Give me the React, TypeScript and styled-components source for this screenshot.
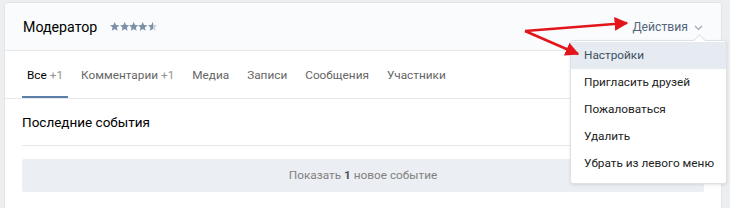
import styled, { createGlobalStyle } from 'styled-components'

const GlobalStyle = createGlobalStyle`
  html, body { margin: 0; padding: 0; }
  body {
    background: #edeef0;
    font-family: Roboto, "Open Sans", "Liberation Sans", sans-serif;
    -webkit-font-smoothing: antialiased;
  }
`

const tabs = [
  { label: 'Все', count: '+1', active: true },
  { label: 'Комментарии', count: '+1' },
  { label: 'Медиа' },
  { label: 'Записи' },
  { label: 'Сообщения' },
  { label: 'Участники' },
]

const menu = ['Настройки', 'Пригласить друзей', 'Пожаловаться', 'Удалить', 'Убрать из левого меню']

export default function App() {
  return (
    <>
      <GlobalStyle />
      <Page>
        <Card>
          <Header>
            <Title>Модератор</Title>
            <Stars>
              {[0, 1, 2, 3].map(i => <Star key={i} />)}
              <Star $half />
            </Stars>
            <Actions>
              Действия
              <svg width="9" height="6" viewBox="0 0 9 6">
                <path d="M1 1l3.5 3.5L8 1" fill="none" stroke="#9aa6b3" strokeWidth="1.2" />
              </svg>
            </Actions>
            <Menu>
              {menu.map((m, i) => (
                <MenuItem key={m} $active={i === 0}>{m}</MenuItem>
              ))}
            </Menu>
          </Header>

          <Tabs>
            {tabs.map(t => (
              <Tab key={t.label} $active={t.active}>
                {t.label}
                {t.count && <Count> {t.count}</Count>}
              </Tab>
            ))}
          </Tabs>

          <Body>
            <SectionTitle>Последние события</SectionTitle>
            <ShowMore>
              Показать <b>1</b> новое событие
            </ShowMore>
          </Body>
        </Card>

        {/* red annotation arrows */}
        <Arrows width="730" height="208" viewBox="0 0 730 208">
          <defs>
            <marker id="head" viewBox="0 0 10 10" refX="9" refY="5" markerWidth="5.5" markerHeight="5.5" orient="auto">
              <path d="M0 0L10 5L0 10z" fill="#e3151b" />
            </marker>
          </defs>
          <path d="M525 31L627 23" stroke="#e3151b" strokeWidth="2.5" fill="none" markerEnd="url(#head)" />
          <path d="M525 31L578 54" stroke="#e3151b" strokeWidth="2.5" fill="none" markerEnd="url(#head)" />
        </Arrows>
      </Page>
    </>
  )
}

function Star({ $half }: { $half?: boolean }) {
  return (
    <svg width="9.4" height="9.4" viewBox="0 0 10 10">
      <defs>
        <linearGradient id="half">
          <stop offset="55%" stopColor="#7c91a8" />
          <stop offset="55%" stopColor="#c9d2dc" />
        </linearGradient>
      </defs>
      <path
        d="M5 0l1.45 3.1 3.5.35-2.65 2.3.8 3.45L5 7.4 1.9 9.2l.8-3.45L.05 3.45l3.5-.35z"
        fill={$half ? 'url(#half)' : '#7c91a8'}
      />
    </svg>
  )
}

const Page = styled.div`
  position: relative;
  width: 730px;
  height: 208px;
  overflow: hidden;
  padding: 2px 8px 0 4px;
  box-sizing: border-box;
`
const Card = styled.div`
  background: #fff;
  border: 1px solid #e3e4e8;
  border-bottom: none;
  border-radius: 4px 4px 0 0;
  height: 240px;
`
const Header = styled.div`
  position: relative;
  display: flex;
  align-items: center;
  height: 47px;
  padding: 0 18px;
  background: #fafbfc;
  border-bottom: 1px solid #e7e8ec;
  border-radius: 4px 4px 0 0;
`
const Title = styled.div`
  font-size: 14.2px;
  color: #000;
`
const Stars = styled.div`
  display: flex;
  margin-left: 13px;
  margin-top: 1px;
`
const Actions = styled.div`
  margin-left: auto;
  display: flex;
  align-items: center;
  gap: 6px;
  font-size: 12.2px;
  color: #55677d;
  svg { margin-top: 2px; }
`
const Menu = styled.div`
  position: absolute;
  z-index: 2;
  top: 37px;
  right: -6px;
  width: 155px;
  background: #fff;
  border: 1px solid #dce1e6;
  border-radius: 3px;
  box-shadow: 0 1px 3px rgba(0, 0, 0, 0.1);
  padding: 1px 0 6px;
  &::before {
    content: '';
    position: absolute;
    top: -5px;
    right: 22px;
    width: 8px;
    height: 8px;
    background: #fff;
    border-left: 1px solid #dce1e6;
    border-top: 1px solid #dce1e6;
    transform: rotate(45deg);
  }
`
const MenuItem = styled.div<{ $active?: boolean }>`
  position: relative;
  height: 27px;
  line-height: 27px;
  padding: 0 13px;
  font-size: 11.8px;
  white-space: nowrap;
  color: ${({ $active }) => ($active ? '#3d4e62' : '#222')};
  background: ${({ $active }) => ($active ? '#e5ebf1' : 'transparent')};
`
const Tabs = styled.div`
  display: flex;
  gap: 8px;
  height: 47px;
  padding: 0 17px;
  border-bottom: 1px solid #e7e8ec;
`
const Tab = styled.div<{ $active?: boolean }>`
  display: flex;
  align-items: center;
  padding: 0 5px;
  font-size: 11.8px;
  white-space: pre;
  color: ${({ $active }) => ($active ? '#000' : '#656565')};
  box-shadow: ${({ $active }) => ($active ? 'inset 0 -2px 0 #5b7fa6' : 'none')};
`
const Count = styled.span`
  color: #939393;
`
const Body = styled.div`
  padding: 0 17px;
`
const SectionTitle = styled.div`
  height: 46px;
  line-height: 46px;
  font-size: 13.5px;
  color: #000;
  border-bottom: 1px solid #e7e8ec;
`
const ShowMore = styled.div`
  margin-top: 13px;
  height: 33px;
  line-height: 33px;
  text-align: center;
  font-size: 11.8px;
  color: #828282;
  background: #ebeef2;
  border-radius: 2px;
  b { color: #555; }
`
const Arrows = styled.svg`
  position: absolute;
  left: 0;
  top: 0;
  z-index: 3;
  pointer-events: none;
`
